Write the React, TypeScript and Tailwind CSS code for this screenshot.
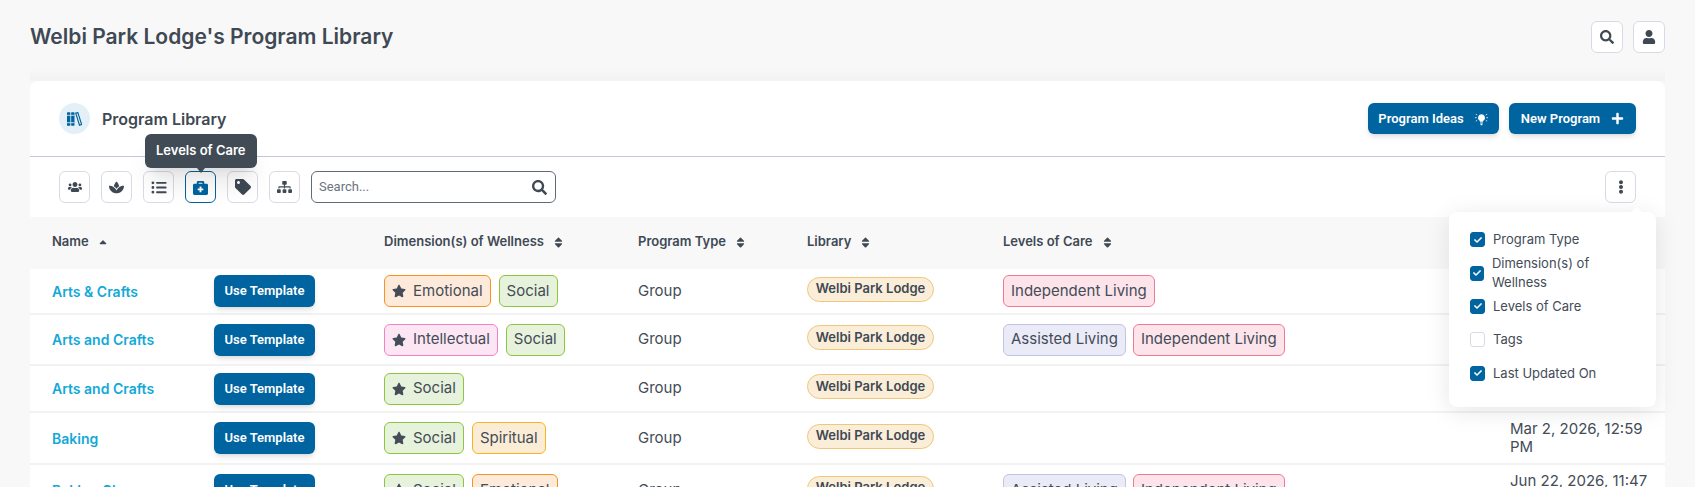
import React from 'react';
import {
  FaUsers, FaSpa, FaListUl, FaBriefcaseMedical, FaTag, FaSitemap, FaSearch, FaUser,
  FaPlus, FaEllipsisV, FaStar, FaSort, FaSortUp, FaCheck,
} from 'react-icons/fa';

const GRID = 'grid grid-cols-[162px_170px_254px_169px_196px_507px_155px] pl-[22px] items-center';

const TAG_STYLES: Record<string, string> = {
  Emotional: 'bg-[#fdeadb] border-[#f7931e]',
  Social: 'bg-[#e6f2db] border-[#8cc63f]',
  Intellectual: 'bg-[#fde6f3] border-[#f083c4]',
  Spiritual: 'bg-[#fbecd6] border-[#fbb420]',
  'Independent Living': 'bg-[#fde4ea] border-[#ee7a9a]',
  'Assisted Living': 'bg-[#ebebf7] border-[#c3c3e3]',
};

const rows = [
  { name: 'Arts & Crafts', h: 'h-[46px]', dims: ['Emotional', 'Social'], care: ['Independent Living'], date: '' },
  { name: 'Arts and Crafts', h: 'h-[51px]', dims: ['Intellectual', 'Social'], care: ['Assisted Living', 'Independent Living'], date: '' },
  { name: 'Arts and Crafts', h: 'h-[47px]', dims: ['Social'], care: [], date: '' },
  { name: 'Baking', h: 'h-[52px]', dims: ['Social', 'Spiritual'], care: [], date: 'Mar 2, 2026, 12:59 PM' },
  { name: 'Baking Class', h: 'h-[52px]', dims: ['Social', 'Emotional'], care: ['Assisted Living', 'Independent Living'], date: 'Jun 22, 2026, 11:47 AM' },
];

const Tag = ({ label, star }: { label: string; star?: boolean }) => (
  <span className={`flex h-[32px] items-center gap-[7px] rounded-[6px] border px-[7px] text-[15px] text-[#434c57] ${TAG_STYLES[label]}`}>
    {star && <FaStar className="h-[14px] w-[14px] text-[#434c57]" />}
    {label}
  </span>
);

const IconButton = ({ children, active, className }: { children: React.ReactNode; active?: boolean; className?: string }) => (
  <button className={`flex h-[32px] items-center justify-center rounded-[6px] border bg-white text-[#3f4954] ${active ? 'border-[#0064a0] text-[#0064a0]' : 'border-[#d9dae6]'} ${className ?? 'w-[31px]'}`}>
    {children}
  </button>
);

const HeadCell = ({ label, up }: { label: string; up?: boolean }) => (
  <div className="flex items-center gap-[8px] text-[13px] font-semibold text-[#3f4954]">
    {label}
    {up ? <FaSortUp className="mt-[6px] h-[12px] w-[12px]" /> : <FaSort className="h-[13px] w-[13px]" />}
  </div>
);

const Check = ({ label, checked }: { label: string; checked: boolean }) => (
  <div className="flex h-[33.4px] items-center gap-[8px] text-[13px] text-[#434c57]">
    <span className={`flex h-[15px] w-[15px] items-center justify-center rounded-[3px] border ${checked ? 'border-[#0064a0] bg-[#0064a0]' : 'border-[#d9dae6] bg-white'}`}>
      {checked && <FaCheck className="h-[8px] w-[8px] text-white" />}
    </span>
    {label}
  </div>
);

const BooksIcon = () => (
  <svg viewBox="0 0 18 16" className="h-[14px] w-[15px] text-[#0064a0]" fill="currentColor">
    <rect x="0" y="0" width="4" height="16" rx="0.5" />
    <rect x="5" y="0" width="4" height="16" rx="0.5" />
    <rect x="0" y="3" width="9" height="1" fill="#e3f0f7" />
    <rect x="0" y="12" width="9" height="1" fill="#e3f0f7" />
    <path d="M10.5 1 L13 0.3 L17.6 14.6 L15 15.4 Z" fill="none" stroke="currentColor" strokeWidth="1.4" />
  </svg>
);

const BulbIcon = () => (
  <svg viewBox="0 0 16 16" className="h-[14px] w-[15px] text-white" fill="currentColor">
    <path d="M8 2.5a4 4 0 0 0-2.6 7c.5.5.8 1 .9 1.6h3.4c.1-.6.4-1.1.9-1.6A4 4 0 0 0 8 2.5z" />
    <rect x="6.3" y="12" width="3.4" height="1.2" rx="0.4" />
    <rect x="6.8" y="13.8" width="2.4" height="1.2" rx="0.5" />
    <path d="M0.5 6.5h2M13.5 6.5h2M1.5 2.5l1.6 1M14.5 2.5l-1.6 1M1.5 10.5l1.6-1M14.5 10.5l-1.6-1" stroke="currentColor" strokeWidth="0.9" fill="none" />
  </svg>
);

export default function App() {
  return (
    <div className="relative h-[487px] overflow-hidden bg-[#f8f8f8] px-[30px] pt-[20px] font-['Inter',sans-serif]">
      <header className="flex h-[33px] items-center justify-between">
        <h1 className="text-[21px] font-semibold text-[#3f4954]">Welbi Park Lodge's Program Library</h1>
        <div className="flex gap-[10px] pr-[-2px]">
          <IconButton className="w-[32px]"><FaSearch className="h-[14px] w-[14px]" /></IconButton>
          <IconButton className="w-[32px]"><FaUser className="h-[14px] w-[14px]" /></IconButton>
        </div>
      </header>

      <div className="mt-[14px] h-[14px] bg-gradient-to-b from-[#f8f8f8] to-[#f2f2f2]" />

      <main className="relative">
        <section className="rounded-t-[8px] bg-white">
          <div className="flex h-[76px] items-center justify-between border-b border-[#c5c8d4] px-[29px]">
            <div className="flex items-center gap-[12px]">
              <span className="flex h-[31px] w-[31px] items-center justify-center rounded-full bg-[#e3f0f7]"><BooksIcon /></span>
              <h2 className="text-[16px] font-semibold text-[#3f4954]">Program Library</h2>
            </div>
            <div className="flex gap-[10px] font-['Roboto',sans-serif] text-[13px] font-semibold text-white">
              <button className="flex h-[31px] w-[131px] items-center justify-center gap-[10px] rounded-[6px] bg-[#0064a0] shadow-md">Program Ideas <BulbIcon /></button>
              <button className="flex h-[31px] w-[127px] items-center justify-center gap-[11px] rounded-[6px] bg-[#0064a0] shadow-md">New Program <FaPlus className="h-[13px] w-[13px]" /></button>
            </div>
          </div>

          <div className="flex h-[60px] items-start justify-between px-[29px] pt-[14px]">
            <div className="flex items-center gap-[11px]">
              <IconButton><FaUsers className="h-[14px] w-[14px]" /></IconButton>
              <IconButton><FaSpa className="h-[15px] w-[15px]" /></IconButton>
              <IconButton><FaListUl className="h-[15px] w-[16px]" /></IconButton>
              <IconButton active><FaBriefcaseMedical className="h-[15px] w-[15px]" /></IconButton>
              <IconButton><FaTag className="h-[16px] w-[16px]" /></IconButton>
              <IconButton><FaSitemap className="h-[14px] w-[15px]" /></IconButton>
              <div className="flex h-[32px] w-[245px] items-center justify-between rounded-[6px] border border-[#5f6b78] pl-[7px] pr-[8px]">
                <span className="font-['Roboto',sans-serif] text-[13px] text-[#6b7480]">Search...</span>
                <FaSearch className="h-[15px] w-[15px] text-[#3f4954]" />
              </div>
            </div>
            <IconButton><FaEllipsisV className="h-[14px] w-[14px]" /></IconButton>
          </div>
        </section>

        <div className={`${GRID} h-[52px] pb-[2px]`}>
          <HeadCell label="Name" up />
          <div />
          <HeadCell label="Dimension(s) of Wellness" />
          <HeadCell label="Program Type" />
          <HeadCell label="Library" />
          <HeadCell label="Levels of Care" />
        </div>

        <div className="bg-white">
          {rows.map((row, i) => (
            <div key={i} className={`${GRID} ${row.h} border-b-2 border-[#f2f2f3] text-[14px] text-[#434c57]`}>
              <a className="text-[14px] font-semibold text-[#12a9d8]">{row.name}</a>
              <button className="flex h-[32px] w-[101px] items-center justify-center rounded-[6px] bg-[#0064a0] font-['Roboto',sans-serif] text-[13px] font-semibold text-white shadow-md">Use Template</button>
              <div className="flex gap-[8px]">
                {row.dims.map((d, j) => <Tag key={d} label={d} star={j === 0} />)}
              </div>
              <div className="text-[15px]">Group</div>
              <div className="flex">
                <span className="mb-[4px] flex h-[25px] w-[127px] items-center justify-center rounded-full border border-[#f0c67c] bg-[#fbeed8] text-[13px] font-semibold text-[#3f4954]">Welbi Park Lodge</span>
              </div>
              <div className="flex gap-[7px]">
                {row.care.map((c) => <Tag key={c} label={c} />)}
              </div>
              <div className="text-[15px] leading-[18px]">{row.date}</div>
            </div>
          ))}
        </div>

        <div className="absolute left-[115px] top-[53px] rounded-[6px] bg-[#414b55] px-[11px] py-[7px] text-[13px] font-semibold text-white shadow-xl">
          Levels of Care
          <span className="absolute left-1/2 top-full -ml-[4px] h-0 w-0 border-x-[4px] border-t-[5px] border-x-transparent border-t-[#414b55]" />
        </div>

        <div className="absolute left-[1419px] top-[131px] h-[195px] w-[207px] rounded-[8px] bg-white px-[21px] pt-[11px] shadow-[0_4px_24px_rgba(0,0,0,0.1)]">
          <span className="absolute -top-[5px] right-[13px] h-0 w-0 border-x-[6px] border-b-[6px] border-x-transparent border-b-white" />
          <Check label="Program Type" checked />
          <Check label="Dimension(s) of Wellness" checked />
          <Check label="Levels of Care" checked />
          <Check label="Tags" checked={false} />
          <Check label="Last Updated On" checked />
        </div>
      </main>
    </div>
  );
}
